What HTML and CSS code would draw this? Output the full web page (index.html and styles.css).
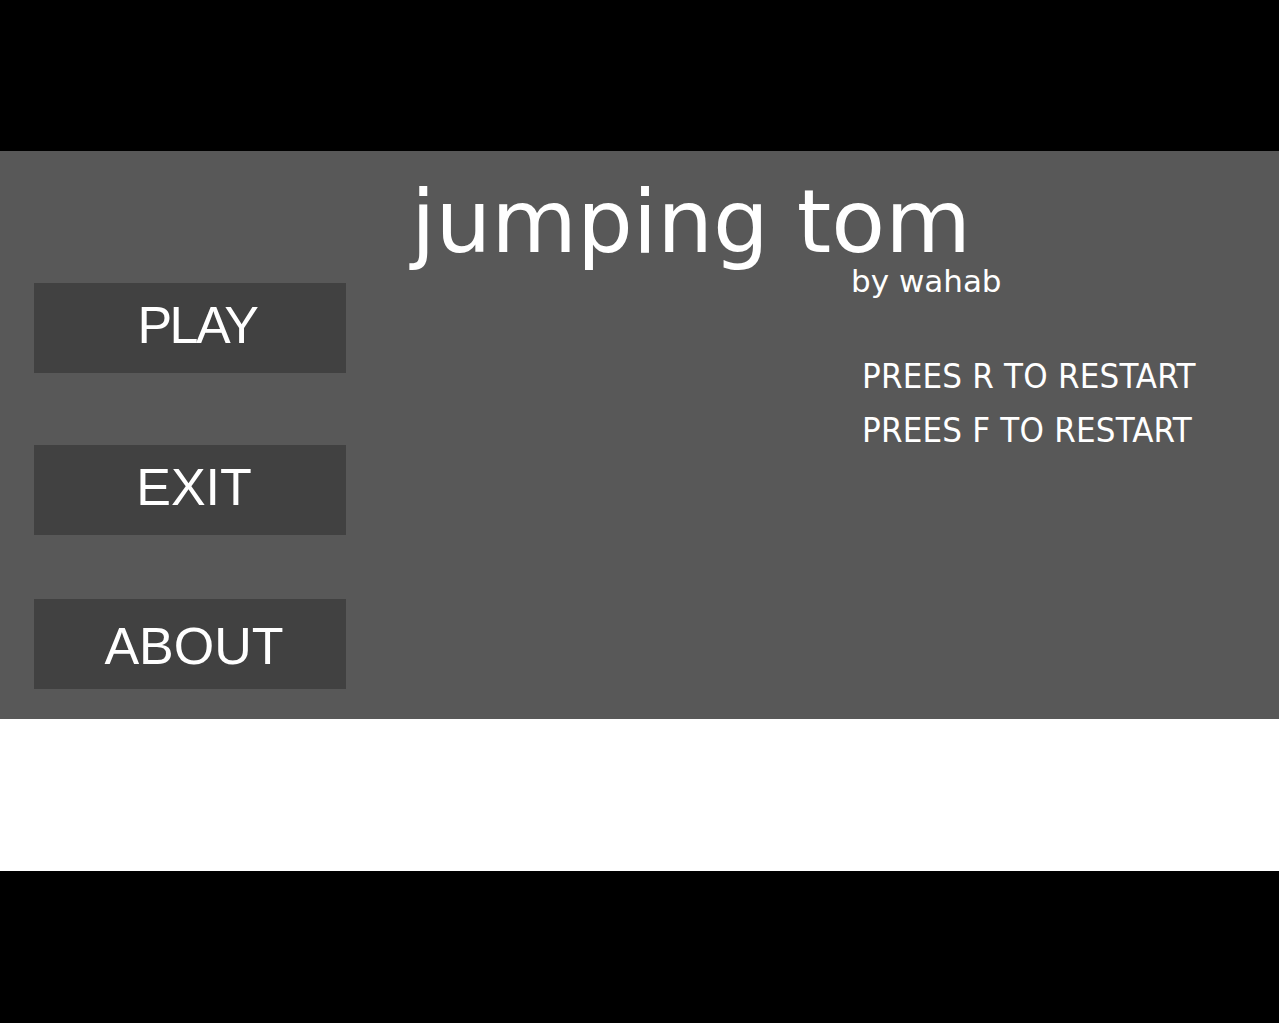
FILE: index.html
```html
<!DOCTYPE html>
<html>
  <head>
    <link rel="stylesheet" href="styles.css">
  </head>
  <body>
    <div class="letterbox"></div>
    <div class="stage">
      <div class="menu">
        <button class="menu-button play">PLAY</button>
        <button class="menu-button exit">EXIT</button>
        <button class="menu-button about">ABOUT</button>
      </div>
      <div class="info">
        <h1 class="title">jumping tom</h1>
        <div class="byline">by wahab</div>
        <div class="hints">
          <div class="hint">PREES R TO RESTART</div>
          <div class="hint">PREES F TO RESTART</div>
        </div>
      </div>
    </div>
    <div class="ground"></div>
    <div class="letterbox"></div>
  </body>
</html>
```

FILE: styles.css
```css
body {
  margin: 0;
  padding: 0;
  overflow: hidden;
  background-color: #000;
  font-family: "DejaVu Sans", sans-serif;
  color: #fff;
}
.letterbox {
  height: 151px;
  background-color: #000;
}
.stage {
  display: flex;
  height: 568px;
  background-color: #585858;
}
.menu {
  display: flex;
  flex-direction: column;
  width: 312px;
  padding: 132px 0 0 34px;
}
.menu-button {
  display: flex;
  align-items: center;
  justify-content: center;
  height: 90px;
  padding: 0 0 6px 8px;
  border: none;
  background-color: #414141;
  color: #fff;
  font-family: "Liberation Sans", Arial, sans-serif;
  font-size: 52px;
  font-kerning: normal;
}
.menu-button.play {
  padding-left: 14px;
  letter-spacing: -2.5px;
}
.menu-button.exit {
  margin-top: 72px;
}
.menu-button.about {
  margin-top: 64px;
  padding: 4px 0 0 8px;
}
.info {
  flex: 1;
}
.title {
  margin: 27px 0 0 65px;
  font-size: 88px;
  font-weight: normal;
  line-height: 1;
  white-space: nowrap;
}
.byline {
  margin-left: 505px;
  font-size: 31px;
  line-height: 1;
}
.hints {
  margin: 52px 0 0 516px;
  font-family: "DejaVu Sans Condensed", "DejaVu Sans", sans-serif;
  font-stretch: condensed;
  font-size: 34.5px;
  letter-spacing: 0.2px;
  line-height: 54px;
  white-space: nowrap;
}
.ground {
  height: 152px;
  background-color: #fff;
}
```
